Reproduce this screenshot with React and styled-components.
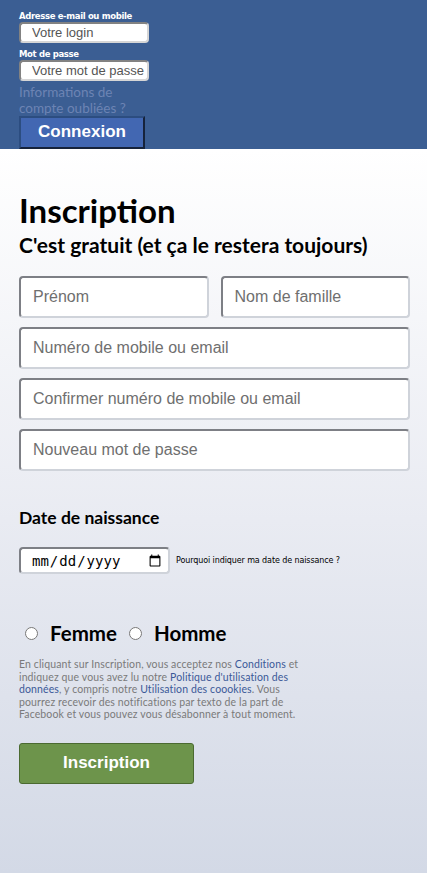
import React from "react";
import styled, { createGlobalStyle } from "styled-components";

const GlobalStyle = createGlobalStyle`
  html, body {
    margin: 0;
    padding: 0;
  }
  body {
    min-height: 873px;
    background: linear-gradient(180deg, #ffffff 149px, #e9ebf2 520px, #d3d9e6 873px);
    font-family: "Liberation Sans", Arial, sans-serif;
  }
`;

const TopBar = styled.header`
  background: #3b5e93;
  height: 149px;
  box-sizing: border-box;
  padding: 10px 19px 0;
  display: flex;
  flex-direction: column;
`;

const SmallLabel = styled.label`
  color: #ffffff;
  font-family: "DejaVu Sans", Tahoma, sans-serif;
  font-size: 8.5px;
  font-weight: bold;
  letter-spacing: -0.35px;
  line-height: 12px;
  margin-top: ${(p) => p.$top || 0}px;
`;

const LoginInput = styled.input`
  width: 130px;
  height: 22px;
  box-sizing: border-box;
  border: 2px inset #d6d6d6;
  border-radius: 4px;
  padding: 0 0 0 11px;
  font-family: "Liberation Sans", Arial, sans-serif;
  font-size: 13px;
  background: #fff;
  &::placeholder {
    color: #555;
  }
`;

const Forgot = styled.a`
  width: 130px;
  color: #6d84b4;
  font-family: "Lato", sans-serif;
  font-size: 13.5px;
  line-height: 16px;
  margin-top: 3px;
  text-decoration: none;
`;

const LoginButton = styled.button`
  width: 126px;
  height: 35px;
  margin-top: 0;
  background: #4267b2;
  color: #fff;
  border: none;
  border-top: 2px solid #2c4d80;
  border-right: 2px solid #16233b;
  border-bottom: 2px solid #16233b;
  border-left: 2px solid #2c4d80;
  font-family: "Liberation Sans", Arial, sans-serif;
  font-weight: bold;
  font-size: 17px;
  padding: 0;
`;

const Main = styled.main`
  padding: 40px 17px 40px 19px;
  display: flex;
  flex-direction: column;
`;

const Title = styled.h1`
  margin: 0;
  font-family: "Lato", sans-serif;
  font-weight: bold;
  font-size: 33px;
  line-height: 42px;
  color: #000;
`;

const Subtitle = styled.h2`
  margin: 1px 0 0;
  font-family: "Lato", sans-serif;
  font-weight: bold;
  font-size: 21px;
  line-height: 26px;
  color: #000;
`;

const Fields = styled.div`
  margin-top: 18px;
  display: grid;
  grid-template-columns: 1fr 1fr;
  column-gap: 12px;
  row-gap: 9px;
`;

const Field = styled.input`
  grid-column: ${(p) => (p.$full ? "1 / -1" : "auto")};
  height: 42px;
  box-sizing: border-box;
  border: 2px solid #cfd3da;
  border-top-color: #7d7f85;
  border-left-color: #7d7f85;
  border-radius: 4px;
  padding: 0 12px;
  font-family: "Liberation Sans", Arial, sans-serif;
  font-size: 16px;
  background: #fff;
  min-width: 0;
  &::placeholder {
    color: #6f6f6f;
  }
`;

const SectionTitle = styled.h3`
  margin: 36px 0 0;
  font-family: "Lato", sans-serif;
  font-weight: bold;
  font-size: 17.5px;
  line-height: 22px;
  color: #000;
`;

const DateRow = styled.div`
  margin-top: 18px;
  display: flex;
  align-items: center;
  gap: 6px;
`;

const DateInput = styled.input`
  width: 151px;
  height: 27px;
  box-sizing: border-box;
  border: 2px solid #cfd3da;
  border-top-color: #7d7f85;
  border-left-color: #7d7f85;
  border-radius: 4px;
  padding: 0 4px 0 10px;
  font-family: "DejaVu Sans Mono", monospace;
  font-size: 14px;
  background: #fff;
`;

const Why = styled.a`
  font-family: "DejaVu Sans", Tahoma, sans-serif;
  font-size: 8px;
  letter-spacing: -0.1px;
  color: #000;
  text-decoration: none;
`;

const GenderRow = styled.div`
  margin-top: 47px;
  display: flex;
  align-items: center;
  padding-left: 6px;
`;

const Radio = styled.input`
  width: 13px;
  height: 13px;
  margin: 0 12px 0 0;
`;

const RadioLabel = styled.label`
  font-family: "Lato", sans-serif;
  font-weight: bold;
  font-size: 20.5px;
  color: #000;
  margin-right: 12px;
  display: flex;
  align-items: center;
`;

const Legal = styled.p`
  margin: 13px 0 0;
  font-family: "Lato", sans-serif;
  font-size: 10.5px;
  letter-spacing: 0.12px;
  line-height: 12.5px;
  color: #7a7a7a;
`;

const LegalLine = styled.span`
  display: block;
  white-space: nowrap;
`;

const LegalLink = styled.a`
  color: #3b5998;
  text-decoration: none;
`;

const SignupButton = styled.button`
  margin-top: 22px;
  width: 175px;
  height: 41px;
  background: #6d944b;
  border: 1px solid #4b6a31;
  border-radius: 3px;
  color: #fff;
  font-family: "Liberation Sans", Arial, sans-serif;
  font-weight: bold;
  font-size: 17px;
  padding: 0;
`;

export default function App() {
  return (
    <>
      <GlobalStyle />
      <TopBar>
        <SmallLabel>Adresse e-mail ou mobile</SmallLabel>
        <LoginInput placeholder="Votre login" />
        <SmallLabel $top={5}>Mot de passe</SmallLabel>
        <LoginInput type="password" placeholder="Votre mot de passe" />
        <Forgot href="#">Informations de compte oubliées ?</Forgot>
        <LoginButton>Connexion</LoginButton>
      </TopBar>

      <Main>
        <Title>Inscription</Title>
        <Subtitle>C'est gratuit (et ça le restera toujours)</Subtitle>

        <Fields>
          <Field placeholder="Prénom" />
          <Field placeholder="Nom de famille" />
          <Field $full placeholder="Numéro de mobile ou email" />
          <Field $full placeholder="Confirmer numéro de mobile ou email" />
          <Field $full type="password" placeholder="Nouveau mot de passe" />
        </Fields>

        <SectionTitle>Date de naissance</SectionTitle>
        <DateRow>
          <DateInput type="date" />
          <Why href="#">Pourquoi indiquer ma date de naissance ?</Why>
        </DateRow>

        <GenderRow>
          <RadioLabel>
            <Radio type="radio" name="sexe" />
            Femme
          </RadioLabel>
          <RadioLabel>
            <Radio type="radio" name="sexe" />
            Homme
          </RadioLabel>
        </GenderRow>

        <Legal>
          <LegalLine>
            En cliquant sur Inscription, vous acceptez nos{" "}
            <LegalLink href="#">Conditions</LegalLink> et
          </LegalLine>
          <LegalLine>
            indiquez que vous avez lu notre{" "}
            <LegalLink href="#">Politique d'utilisation des</LegalLink>
          </LegalLine>
          <LegalLine>
            <LegalLink href="#">données</LegalLink>, y compris notre{" "}
            <LegalLink href="#">Utilisation des coookies</LegalLink>. Vous
          </LegalLine>
          <LegalLine>pourrez recevoir des notifications par texto de la part de</LegalLine>
          <LegalLine>Facebook et vous pouvez vous désabonner à tout moment.</LegalLine>
        </Legal>

        <SignupButton>Inscription</SignupButton>
      </Main>
    </>
  );
}
